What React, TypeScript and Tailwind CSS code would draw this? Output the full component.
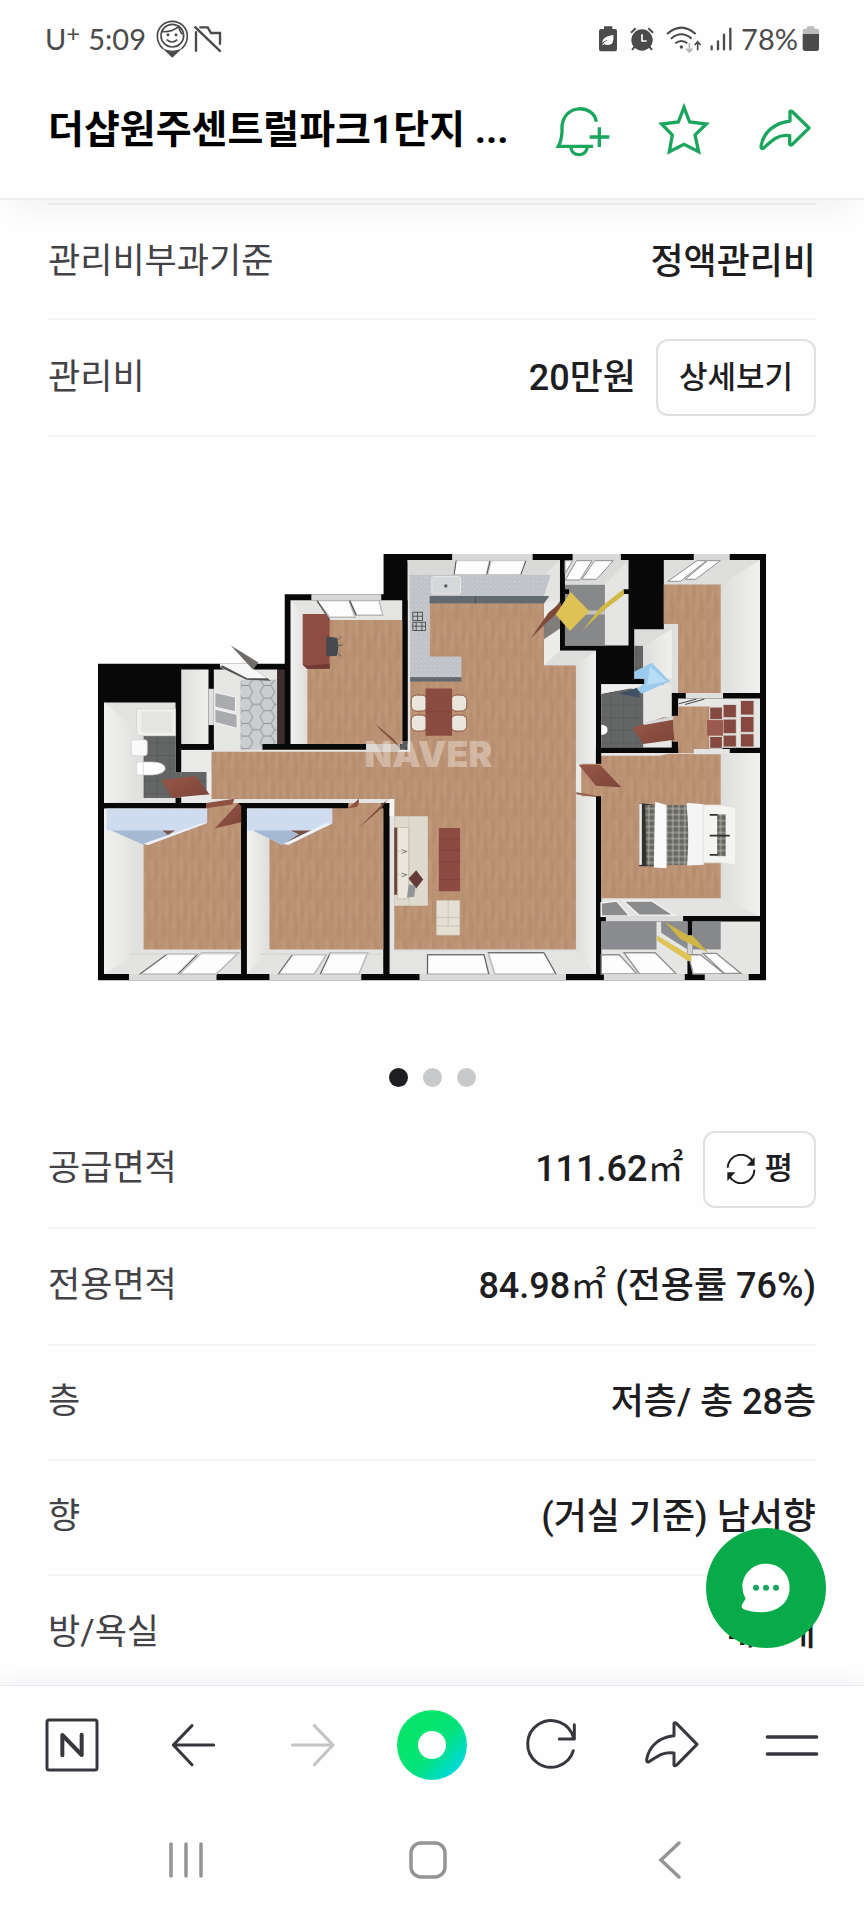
import React from "react";

function Row({
  label,
  tall = false,
  last = false,
  children,
}: {
  label: string;
  tall?: boolean;
  last?: boolean;
  children: React.ReactNode;
}) {
  return (
    <div
      className={`flex items-center justify-between ${tall ? "h-[117px]" : "h-[115px]"} ${
        last ? "" : "border-b-2 border-[#f4f5f6]"
      }`}
    >
      <dt className="text-[35px] leading-[44px] text-[#424247]">{label}</dt>
      <dd className="flex items-center gap-5 text-[36px] leading-[44px] font-medium text-[#1e1e22]">{children}</dd>
    </div>
  );
}

function SquareMetre() {
  return <span className="font-normal">㎡</span>;
}

function StatusBar() {
  return (
    <div className="flex h-20 shrink-0 items-center justify-between pr-11 pb-0.5 pl-[45px] font-['Lato',sans-serif] text-[29px] leading-[40px] text-[#4b4b4b]">
      <div className="flex items-center">
        <span>U</span>
        <span className="mb-3 text-[24px] leading-[24px]">+</span>
        <span className="ml-2">5:09</span>
        <svg className="ml-2 h-10 w-9" viewBox="460 58 108 120" fill="none" stroke="#4b4b4b" strokeWidth="5">
          <path d="M488 148 Q470 132 470 109 A45 44 0 0 1 560 109 Q560 132 542 148" />
          <path d="M485 146 L515 174 L545 146 Q515 160 485 146z" fill="#4b4b4b" stroke="none" />
          <circle cx="515" cy="108" r="34" />
          <path d="M484 96 Q514 98 534 80 Q538 98 546 104 M498 120 Q514 134 530 120" />
          <circle cx="502" cy="105" r="2" fill="#4b4b4b" />
          <circle cx="526" cy="105" r="2" fill="#4b4b4b" />
        </svg>
        <svg className="ml-1 h-[30px] w-7" viewBox="586 74 84 90" fill="none" stroke="#4b4b4b" strokeWidth="7">
          <path d="M592 96 V157 M588 82 L666 157 M602 84 L627 84 L637 101 L664 101 V136" />
        </svg>
      </div>
      <div className="flex items-center">
        <svg className="h-[26px] w-[18px]" viewBox="510 79 54 78">
          <path
            d="M516 88h9v-8h25v8h9q5 0 5 6v55q0 6-6 6h-42q-6 0-6-6V94q0-6 6-6z"
            fill="#4b4b4b"
          />
          <path d="M519 131q0-21 34-25q4 30-17 30q-8 0-10-3l-7 5q5-13 21-17q-15 1-21 10z" fill="#fff" />
        </svg>
        <svg className="ml-[13px] h-[26px] w-6" viewBox="604 79 72 78" fill="none" stroke="#4b4b4b" strokeWidth="6">
          <circle cx="640" cy="121" r="29" fill="#4b4b4b" />
          <path d="M607 99l14-13M673 99l-14-13M618 141l-8 10M662 141l8 10" />
          <path d="M640 104v20h14" stroke="#fff" strokeWidth="5" />
        </svg>
        <svg className="ml-3 h-[27px] w-9" viewBox="708 74 108 81" fill="none" stroke="#4b4b4b" strokeWidth="6">
          <path d="M711 98q43-38 86 0M723 112q31-26 62 0M736 126q18-14 36 0" />
          <circle cx="754" cy="137" r="5" fill="#4b4b4b" stroke="none" />
          <path d="M778 125v26m-9-9l9 10l9-10" stroke="#b5b5b5" strokeWidth="5" />
          <path d="M803 147v-26m-9 10l9-10l9 10" strokeWidth="5" />
        </svg>
        <svg
          className="ml-[7px] h-6 w-6"
          viewBox="834 81 72 72"
          stroke="#4b4b4b"
          strokeWidth="7"
          strokeLinecap="round"
        >
          <path d="M842 139v9M861 124v24M879 104v44M898 86v62" />
        </svg>
        <span className="ml-2">78%</span>
        <svg className="ml-1 h-[26px] w-[18px]" viewBox="1110 79 54 78">
          <path d="M1112 103v-11q0-5 6-5h7v-7h22v7h8q6 0 6 5v11z" fill="#bdbdbd" />
          <path d="M1112 103h49v44q0 7-7 7h-35q-7 0-7-7z" fill="#4b4b4b" />
        </svg>
      </div>
    </div>
  );
}

function Header() {
  return (
    <header className="relative z-10 flex h-[120px] shrink-0 items-center gap-[45px] border-b-2 border-[#ededee] bg-[#fefefe] pr-[51px] pb-[18px] pl-12 shadow-[0_20px_30px_-10px_rgba(0,0,0,0.05)]">
      <h1 className="min-w-0 flex-1 truncate text-[39px] leading-[56px] font-bold text-black">
        더샵원주센트럴파크1단지 ...
      </h1>
      <button type="button" aria-label="알림 추가">
        <svg className="size-14" viewBox="370 305 168 168" fill="none" stroke="#1ba65e" strokeWidth="10">
          <path d="M494 364 C486 313 400 308 391 376 Q393 415 380 438 H484" />
          <path d="M417 440q4 23 25 23t25-23M503 381v59M474 410h59" />
        </svg>
      </button>
      <button type="button" aria-label="관심 등록">
        <svg className="size-14" viewBox="672 305 168 168" fill="none" stroke="#1ba65e" strokeWidth="10">
          <path d="M756 321 L773 365 L823 371 L789 404 L800 454 L756 432 L712 454 L721 404 L689 371 L739 365z" />
        </svg>
      </button>
      <button type="button" aria-label="공유">
        <svg
          className="size-14"
          viewBox="974 305 168 168"
          fill="none"
          stroke="#1ba65e"
          strokeWidth="10"
          strokeLinejoin="round"
        >
          <path d="M1073 333 Q1077 331 1081 335 L1130 383 L1080 432 Q1075 436 1072 432 V406 C1035 401 1017 422 994 443 Q986 448 986 438 C993 392 1030 368 1073 362z" />
        </svg>
      </button>
    </header>
  );
}

function FloorPlan() {
  return (
    <svg className="w-full" viewBox="52 42 2007 1282" role="img" aria-label="단지 평면도">
      <defs>
        <pattern id="wood" width="44" height="120" patternUnits="userSpaceOnUse">
          <rect width="44" height="120" fill="#bb9274" />
          <path d="M0 0h11v70h-11zM22 40h11v80h-11z" fill="#b78e70" />
          <path d="M11 30h11v60h-11zM33 0h11v55h-11z" fill="#be9678" />
          <path d="M11 20v34M33 70v36M3 88v26" stroke="#ae8465" strokeWidth="1.5" />
        </pattern>
        <pattern id="slate" width="38" height="38" patternUnits="userSpaceOnUse">
          <rect width="38" height="38" fill="#646565" />
          <path d="M0 0H38M0 0V38" stroke="#525353" strokeWidth="3" />
        </pattern>
        <pattern id="hex" width="66" height="76" patternUnits="userSpaceOnUse">
          <rect width="66" height="76" fill="#cbcdd1" />
          <path d="M0 38H11L22 19L11 0M22 19H44L55 38H66M55 38L44 57H22L11 38M22 57L11 76M44 19L55 0M44 57L55 76" fill="none" stroke="#83858a" strokeWidth="2.5" />
        </pattern>
        <pattern id="granite" width="14" height="14" patternUnits="userSpaceOnUse">
          <rect width="14" height="14" fill="#c2c5ca" />
          <path d="M2 2h3v2H2zM9 5h3v3H9zM4 10h3v2H4z" fill="#b0b4ba" />
          <path d="M7 1h2v3H7zM1 6h3v2H1zM10 11h3v2h-3z" fill="#d5d7da" />
        </pattern>
        <pattern id="plaid" width="18" height="18" patternUnits="userSpaceOnUse">
          <rect width="18" height="18" fill="#8b8b83" />
          <path d="M0 3h18M0 9h18M3 0v18M9 0v18" stroke="#555650" strokeWidth="2.5" />
          <path d="M0 15h18M15 0v18" stroke="#b9b8ad" strokeWidth="2" />
        </pattern>
        <linearGradient id="wall" x1="0" y1="0" x2="1" y2="0">
          <stop offset="0" stopColor="#f1f1f0" />
          <stop offset="1" stopColor="#dededc" />
        </linearGradient>
        <linearGradient id="wallR" x1="0" y1="0" x2="1" y2="0">
          <stop offset="0" stopColor="#dededc" />
          <stop offset="1" stopColor="#f0f0ef" />
        </linearGradient>
        <linearGradient id="door" x1="0" y1="0" x2="1" y2="1">
          <stop offset="0" stopColor="#98584a" />
          <stop offset="1" stopColor="#7c4438" />
        </linearGradient>
      </defs>

      <path d="M52 372H613V163H910V42H2059V1323H52z" fill="#080808" />

      {/* Left bathroom */}
      <path d="M70 488H285V790H70z" fill="#e3e3e1" />
      <path d="M70 488L189 588V775L70 790z" fill="url(#wall)" />
      <path d="M189 588H285V697H378V765L300 775H189z" fill="url(#slate)" />
      <path d="M168 507H285V588H178Q168 588 168 578z" fill="#efefee" stroke="#d0d0ce" strokeWidth="2" />
      <path d="M182 516H274V578H190Q182 578 182 570z" fill="#e4e4e2" />
      <rect x="152" y="600" width="48" height="48" rx="8" fill="#fafafa" stroke="#cfcfcd" strokeWidth="2" />
      <path d="M168 667H215Q254 668 254 688Q250 703 215 706L168 706z" fill="#fff" stroke="#ccc" strokeWidth="2" />
      <path d="M188 667V706" stroke="#ccc" strokeWidth="2" />

      {/* Storage and entry */}
      <path d="M302 389H384V613H302z" fill="url(#wallR)" />
      <path d="M384 447H400V556H384z" fill="#dfdfdd" />
      <path d="M400 389H592V636H400z" fill="#e6e6e4" />
      <path d="M590 389H613V613H590z" fill="#3b2d2c" />
      <path d="M480 420H590V630H480z" fill="url(#hex)" />
      <path d="M403 458L465 472V516L403 502zM403 508L470 524V566L403 548z" fill="#a9abae" stroke="#f6f6f6" strokeWidth="3" />
      <path d="M418 372H520V390L572 420L498 418L420 384z" fill="#f7f7f7" />
      <path d="M420 382L498 420L572 423L520 386L560 415H500L425 376z" fill="#55514f" />
      <path d="M450 316L534 368L518 390z" fill="#6f6c69" />

      {/* Corridor, living room, kitchen */}
      <path d="M302 630H400V790H302z" fill="#e9e9e8" />
      <path d="M302 697H392V765H302z" fill="url(#slate)" />
      <path d="M392 630H546V613H982V60H1440V333H1548V1304H928V790H392z" fill="#e4e4e2" />
      <path d="M982 60H1440L1392 104H990z" fill="#d9d9d7" />
      <path d="M1488 376L1548 333V1304L1488 1230z" fill="url(#wallR)" />
      <path d="M393 636H990V400H1048V190H1392V376H1488V1230H942V778H393z" fill="url(#wood)" />
      <path d="M546 613H858V630H546z" fill="#080808" />
      <path d="M302 613H400V630H302z" fill="#080808" />
      <path d="M966 181H982V630H958V613H966z" fill="#080808" />
      <path d="M858 613H958V636H858z" fill="#cfc3ba" />
      <path d="M378 697H392V765H378z" fill="#eee" />
      <path d="M242 722L345 708L387 764L275 774z" fill="url(#door)" />

      {/* Study */}
      <path d="M631 181H966V613H631z" fill="#e4e4e2" />
      <path d="M631 181L681 240V613H631z" fill="url(#wall)" />
      <path d="M681 240H966V613H681z" fill="url(#wood)" />
      <path d="M693 163H903V181H693z" fill="#d8d8d7" />
      <path d="M710 182H806L824 232H748zM808 182H896L908 226H828z" fill="#fdfdfd" stroke="#b9b9b8" strokeWidth="4" />
      <path d="M710 182L748 240M808 182L828 226" stroke="#555" strokeWidth="4" />
      <path d="M667 222H735L748 240V387H680L667 375z" fill="#8d4d42" />
      <path d="M667 375L680 387H748V372L680 378z" fill="#6e3a31" />
      <path d="M738 290L770 294Q778 320 770 348L738 350z" fill="#45484e" />
      <path d="M770 318L788 315M774 300L784 290M772 340L784 350" stroke="#5b5d61" strokeWidth="3" />
      <path d="M886 553L940 598L960 625L900 570z" fill="#80503c" />

      {/* Lower-left bedrooms */}
      <path d="M70 807H482V1304H70z" fill="#e3e3e1" />
      <path d="M70 807H189V1230L70 1304z" fill="url(#wall)" />
      <path d="M189 790H482V1230H189z" fill="url(#wood)" />
      <path d="M499 807H909V1304H499z" fill="#e3e3e1" />
      <path d="M499 807H567V1230L499 1304z" fill="url(#wall)" />
      <path d="M567 790H909V1230H567z" fill="url(#wood)" />
      <path d="M52 790H378V806H52zM474 790H804V806H474zM904 790H928V806H904zM482 806H499V1306H482z" fill="#080808" />
      <path d="M378 790L462 777L456 795L376 806z" fill="#8e5142" />
      <path d="M804 806L836 777V790L830 802z" fill="#8e5142" />
      <path d="M403 866L474 790L482 800V848z" fill="url(#door)" />
      <path d="M834 866L920 780L904 806z" fill="#824a3b" />
      <path d="M928 778H942V830H928z" fill="#f5f5f5" />
      <path d="M78 807H380V850L202 916L92 873H78z" fill="#cfdcef" />
      <path d="M92 873H252L272 886L190 916z" fill="#a6b9d3" />
      <path d="M246 873H284L262 886z" fill="#765346" />
      <path d="M380 850L202 916L190 912L362 852z" fill="#eef1f7" />
      <path d="M500 807H756V852L606 916L518 873H500z" fill="#cfdcef" />
      <path d="M518 873H628L655 886L606 916z" fill="#a6b9d3" />
      <path d="M630 873H705L624 916H606L655 884z" fill="#765346" />
      <path d="M756 852L624 916L606 914L735 852z" fill="#eef1f7" />
      <path d="M145 1304H408V1323H145zM567 1304H843V1323H567zM1018 1304H1458V1323H1018z" fill="#d9d9d8" />
      <g fill="#fdfdfd" stroke="#bdbdbc" strokeWidth="5">
        <path d="M178 1304L260 1244H350L292 1304zM296 1304L364 1240H474L408 1304z" />
        <path d="M594 1304L636 1246H738L702 1304zM720 1304L750 1240H862L836 1304z" />
        <path d="M1042 1304V1246H1212L1226 1304zM1244 1304L1224 1240H1392L1428 1304z" />
      </g>
      <path d="M178 1304L260 1244M292 1304L352 1244M594 1304L636 1246M720 1304L750 1240M1042 1304V1246H1212L1226 1304M1224 1240H1392L1428 1304" fill="none" stroke="#5a5a5a" strokeWidth="3" />
      <path d="M150 1244H482M540 1244H909M942 1232H1488" stroke="#d0d0cf" strokeWidth="3" />

      {/* Kitchen and living furniture */}
      <g transform="translate(900 0)">
        <path d="M216 42H458V60H216z" fill="#d8d8d7" />
        <path d="M228 62H328L318 104H222zM334 62H436L424 104H324z" fill="#fdfdfd" stroke="#c5c5c4" strokeWidth="3" />
        <path d="M228 62L222 104M330 62L320 104M438 62L422 104" stroke="#555" strokeWidth="3" />
        <path d="M492 190L540 180V333L492 376z" fill="#ececeb" />
        <path d="M492 376L540 333H648L588 376z" fill="#dededc" />
        <path d="M88 104H512L492 168H148V350H244V412H90z" fill="url(#granite)" />
        <path d="M148 168H508L492 191H148zM90 412H244V425H90z" fill="#626970" />
        <path d="M286 168V191" stroke="#444" strokeWidth="2" />
        <rect x="155" y="110" width="86" height="52" rx="5" fill="#d5d7d8" stroke="#e9e9e9" strokeWidth="3" />
        <circle cx="197" cy="138" r="5" fill="#555" />
        <g fill="none" stroke="#444" strokeWidth="2.5">
          <rect x="98" y="217" width="29" height="25" />
          <rect x="98" y="247" width="38" height="25" />
          <path d="M112 218v24M98 229h29M108 248v24M125 248v24M98 259h38" />
        </g>
        <g fill="#ebe6dc" stroke="#8b5747" strokeWidth="3">
          <rect x="93" y="466" width="48" height="48" rx="16" />
          <rect x="93" y="526" width="48" height="48" rx="16" />
          <rect x="212" y="466" width="48" height="48" rx="16" />
          <rect x="212" y="526" width="48" height="48" rx="16" />
        </g>
        <path d="M136 446H216V588H136z" fill="#8a4b40" />
        <path d="M136 516H216" stroke="#7a4036" strokeWidth="2" />
        <path d="M42 830H143V1099H42z" fill="#dedace" />
        <path d="M42 864H52V1066H42z" fill="#6d4438" />
        <path d="M52 864H86V1078H52z" fill="#eae6db" stroke="#bdb7a6" strokeWidth="2" />
        <path d="M86 830V1099M52 935H86M52 1005H86" stroke="#c4bfb0" strokeWidth="2" />
        <path d="M64 930l16 6l-16 6M64 1000l16 6l-16 6" stroke="#555" strokeWidth="2" fill="none" />
        <path d="M108 992L129 1020L108 1047L85 1017z" fill="#663a38" />
        <path d="M86 1034L106 1040L102 1072L80 1074z" fill="#929699" />
        <path d="M176 865H240V1055H176z" fill="#8c4a42" />
        <path d="M176 898H240M176 932H240M176 967H240M176 1020H240" stroke="#77403a" strokeWidth="2" />
        <path d="M169 1083H239V1187H169z" fill="#e3dfd3" stroke="#c8c3b5" strokeWidth="2" />
        <path d="M169 1134H239M204 1083V1160M169 1160H239" stroke="#c0bbac" strokeWidth="2" />
        <path d="M588 672H604V758H588z" fill="#e9e9e8" />
      </g>

      {/* Right wing */}
      <g transform="translate(1440 0)">
        <path d="M38 42H183V60H38zM402 42H510V60H402z" fill="#d8d8d7" />
        <path d="M15 60H206V317H15z" fill="#e5e5e4" />
        <path d="M15 134H135V317H15z" fill="#87888a" />
        <path d="M15 60H206L135 134H15z" fill="#dbdbda" />
        <path d="M15 212H135V224H15z" fill="#c3c3c3" />
        <path d="M15 62H38L15 100zM50 62H96L60 120H16zM104 62H160L110 118H66z" fill="#fdfdfd" stroke="#8f8f8f" strokeWidth="3" />
        <path d="M0 148H27V162H0zM191 148H208V162H191z" fill="#080808" />
        <path d="M-48 252L0 182V266L-48 298z" fill="#817d7b" />
        <path d="M-89 297L-34 218L2 188L5 208L-40 248z" fill="#7f493a" />
        <path d="M32 156L88 214L30 273L-13 224z" fill="#dec253" />
        <path d="M191 147L192 165L128 214L68 272L122 202z" fill="#d3b744" />

        <path d="M312 60H601V460H312z" fill="#dededc" />
        <path d="M483 134L601 60V460H483z" fill="url(#wallR)" />
        <path d="M312 134H483V460H355V252H312z" fill="url(#wood)" />
        <path d="M324 124L412 62H440L362 124zM376 118L444 62H482L408 118z" fill="#fdfdfd" stroke="#8f8f8f" strokeWidth="3" />

        <path d="M223 268H336V416H223z" fill="#dcdcda" />
        <path d="M223 318H250V416H223z" fill="url(#slate)" />
        <path d="M250 318L336 268V416H250z" fill="url(#wallR)" />
        <path d="M124 433H336V624H124z" fill="#e6e6e5" />
        <path d="M124 462L210 445L250 455V624H124z" fill="url(#slate)" />
        <path d="M124 433H252L210 446L124 462z" fill="#efefee" />
        <path d="M124 555Q143 556 143 571Q143 585 124 586z" fill="#fff" />
        <path d="M178 462L232 444L242 474z" fill="#3f5064" />
        <path d="M223 396L276 369L330 424L245 462L232 446L253 432V417H223z" fill="#9bcbec" />
        <path d="M270 380L320 424L262 436z" fill="#b7dcf4" />

        <path d="M355 476H601V624H355z" fill="#e6e6e5" />
        <path d="M378 460H490V476H378z" fill="#dfdfde" />
        <path d="M355 500L450 500V640H355V606H338V528H355z" fill="url(#wood)" />
        <path d="M357 492L410 478M376 494L434 478" stroke="#444" strokeWidth="3" />
        <g fill="#864940" stroke="#dadad9" strokeWidth="3">
          <path d="M450 502H488V540H450zM450 590H488V626H450z" />
          <path d="M490 494H530V534H490zM490 538H530V582H490zM490 586H530V622H490z" />
          <path d="M542 482H583V526H542zM542 530H583V578H542zM542 582H583V622H542z" />
        </g>
        <path d="M442 541H490V588H442z" fill="#9a5a50" />
        <path d="M218 564L310 533H336L344 600L250 613z" fill="url(#door)" />
        <path d="M252 548L340 529V540L252 556z" fill="#d8d8d8" />

        <path d="M124 640H601V1130H124z" fill="#e3e3e1" />
        <path d="M483 640H601V1130L483 1076z" fill="url(#wallR)" />
        <path d="M64 672H108V642H404V606H440V640H483V1076H124V770H64z" fill="url(#wood)" />
        <path d="M124 640H338L300 648H124zM402 628H510V644H402z" fill="#e4e4e3" />
        <path d="M108 624H355V640H108zM108 640H124V672H108z" fill="#080808" />
        <path d="M56 675L120 675L184 743L108 738z" fill="url(#door)" />
        <path d="M49 758L108 768V772L49 764z" fill="#8e5949" />

        <path d="M238 790L288 796V980H238z" fill="#303131" />
        <path d="M238 792H246V976H238z" fill="#ecebe9" />
        <path d="M256 796H390Q382 880 388 976L260 978z" fill="url(#plaid)" />
        <path d="M286 786L320 796V986L282 984z" fill="#fafafa" />
        <path d="M388 790L432 794V976L382 978Q390 880 380 792z" fill="#f5f5f5" />
        <path d="M430 796H484L528 804V976L484 970H430z" fill="#f4f4f3" stroke="#dddddb" strokeWidth="2" />
        <path d="M472 824H498V950H472z" fill="url(#plaid)" />
        <path d="M450 826H474M450 888H510M450 946H474" stroke="#333" strokeWidth="5" />

        <path d="M124 1090L170 1084L210 1130H124zM190 1084H276L344 1128H238z" fill="#8a8b8d" stroke="#efefee" strokeWidth="5" />
        <path d="M138 1130H370V1146H138z" fill="#d9d9d8" />
        <path d="M124 1146H383V1304H124z" fill="#e5e5e4" />
        <path d="M124 1146H290V1230H124z" fill="#8b8c8f" />
        <path d="M304 1146H383V1230L304 1180z" fill="#8b8c8f" />
        <path d="M398 1146H601V1304H398z" fill="#e5e5e4" />
        <path d="M398 1146H483V1230H398z" fill="#87888a" />
        <path d="M383 1188H398V1264H383z" fill="#d2d2d1" />
        <path d="M124 1246H178L232 1304H124zM192 1240H286L350 1304H240zM386 1246H422L494 1304H400zM430 1242H470L544 1302H494z" fill="#fdfdfd" stroke="#919190" strokeWidth="4" />
        <path d="M132 1304H375V1323H132zM435 1304H567V1323H435z" fill="#d9d9d8" />
        <path d="M292 1188L395 1250V1264H383L292 1204z" fill="#dfc354" />
        <path d="M316 1148L385 1188H398L446 1240L360 1198z" fill="#cfb446" />
      </g>

      <text
        x="853"
        y="683"
        className="font-['Inter',sans-serif] text-[108px] font-black"
        fill="#fff"
        fillOpacity="0.36"
      >
        NAVER
      </text>
    </svg>
  );
}

function RefreshIcon() {
  return (
    <svg className="size-[30px]" viewBox="1102 341 90 90" fill="none" stroke="#1e1e22" strokeWidth="6">
      <path d="M1107 382A40 40 0 0 1 1182 364M1187 388A40 40 0 0 1 1112 408" />
      <path d="M1188 350V376H1164zM1106 422V396H1130z" fill="#1e1e22" stroke="none" />
    </svg>
  );
}

function BrowserBar() {
  const icon = "size-[60px]";
  const line = {
    fill: "none",
    stroke: "#37383d",
    strokeWidth: 9,
    strokeLinecap: "round",
    strokeLinejoin: "round",
  } as const;
  return (
    <nav
      aria-label="브라우저"
      className="relative z-10 grid h-[118px] shrink-0 grid-cols-7 place-items-center border-t border-[#e9ebee] bg-[#fefefe] px-3 shadow-[0_-4px_16px_rgba(60,80,110,0.07)]"
    >
      <button type="button" aria-label="네이버 홈">
        <svg className={icon} viewBox="126 164 180 180" {...line}>
          <rect x="141" y="179" width="150" height="150" rx="6" />
          <path d="M187 285V224L245 284V223" strokeWidth="12" />
        </svg>
      </button>
      <button type="button" aria-label="뒤로">
        <svg className={icon} viewBox="486 164 180 180" {...line}>
          <path d="M576 196L520 254L576 313M520 254H641" />
        </svg>
      </button>
      <button type="button" aria-label="앞으로" disabled>
        <svg className={icon} viewBox="846 164 180 180" {...line} stroke="#c4c4c4">
          <path d="M943 196L999 254L943 313M999 254H878" />
        </svg>
      </button>
      <button type="button" aria-label="그린닷">
        <svg className="size-[70px]" viewBox="0 0 70 70" fill="none">
          <defs>
            <linearGradient id="dot" x1="0.3" y1="0.3" x2="0.9" y2="0.85">
              <stop offset="0" stopColor="#05e56b" />
              <stop offset="0.45" stopColor="#03e27c" />
              <stop offset="1" stopColor="#00d9e3" />
            </linearGradient>
          </defs>
          <circle cx="35" cy="35" r="35" fill="url(#dot)" />
          <circle cx="35" cy="35" r="14" fill="#fefefe" />
        </svg>
      </button>
      <button type="button" aria-label="새로고침">
        <svg className={icon} viewBox="270 164 180 180" {...line}>
          <path d="M424 271A70 70 0 1 1 425 234M427 193V236H382" />
        </svg>
      </button>
      <button type="button" aria-label="공유하기">
        <svg className={icon} viewBox="630 164 180 180" {...line}>
          <path d="M726 189Q729 186 734 190L795 252L733 315Q728 318 726 314V278C692 272 672 292 650 305Q643 306 644 297C652 253 688 229 726 226z" />
        </svg>
      </button>
      <button type="button" aria-label="메뉴">
        <svg className={icon} viewBox="990 164 180 180" {...line} strokeWidth="10">
          <path d="M1006 230H1154M1006 281H1154" />
        </svg>
      </button>
    </nav>
  );
}

function SystemBar() {
  const line = {
    className: "size-11",
    viewBox: "0 0 44 44",
    fill: "none",
    stroke: "#949494",
    strokeWidth: 3.5,
    strokeLinecap: "round",
  } as const;
  return (
    <nav
      aria-label="시스템"
      className="relative z-10 grid h-[117px] shrink-0 grid-cols-3 place-items-center bg-[#fefefe] pr-[73px] pb-1 pl-[65px]"
    >
      <button type="button" aria-label="최근 앱">
        <svg {...line}>
          <path d="M7 6V38M22 6V38M37 6V38" />
        </svg>
      </button>
      <button type="button" aria-label="홈 화면">
        <svg {...line}>
          <rect x="5" y="5" width="34" height="34" rx="10" />
        </svg>
      </button>
      <button type="button" aria-label="이전">
        <svg {...line}>
          <path d="M31 5L13 22L31 39" />
        </svg>
      </button>
    </nav>
  );
}

export default function App() {
  return (
    <div className="flex h-screen flex-col overflow-hidden bg-[#fefefe] font-['Roboto','Noto_Sans_CJK_KR',sans-serif]">
      <StatusBar />
      <Header />
      <div className="relative min-h-0 flex-1">
        <main className="h-full overflow-y-auto [scrollbar-width:none]">
          <dl className="px-12">
            <div className="h-[5px] border-b-2 border-[#f1f2f4]" />
            <Row label="관리비부과기준">정액관리비</Row>
            <Row label="관리비" tall>
              20만원
              <button
                type="button"
                className="h-[77px] rounded-xl border-2 border-[#dfdfe0] px-[21px] text-[31px] font-medium"
              >
                상세보기
              </button>
            </Row>
          </dl>
          <section aria-label="평면도" className="flex flex-col items-center px-[98px] pt-[117px] pb-[25px]">
            <FloorPlan />
            <div className="mt-[87px] flex gap-[15px]">
              <button type="button" aria-label="1번 이미지" className="size-[19px] rounded-full bg-[#1e1e22]" />
              <button type="button" aria-label="2번 이미지" className="size-[19px] rounded-full bg-[#c8c9cb]" />
              <button type="button" aria-label="3번 이미지" className="size-[19px] rounded-full bg-[#c8c9cb]" />
            </div>
          </section>
          <dl className="px-12">
            <Row label="공급면적" tall>
              <span>
                111.62
                <SquareMetre />
              </span>
              <button
                type="button"
                className="flex h-[77px] items-center gap-2 rounded-xl border-2 border-[#dfe0e1] px-[21px] text-[31px] font-medium"
              >
                <RefreshIcon />평
              </button>
            </Row>
            <Row label="전용면적" tall>
              <span>
                84.98
                <SquareMetre /> (전용률 76%)
              </span>
            </Row>
            <Row label="층">저층/ 총 28층</Row>
            <Row label="향">(거실 기준) 남서향</Row>
            <Row label="방/욕실" last>
              4/2개
            </Row>
          </dl>
        </main>
        <button
          type="button"
          aria-label="채팅 문의"
          className="absolute right-[38px] bottom-[37px] flex size-[120px] items-center justify-center rounded-full bg-[#07ab4a]"
        >
          <svg className="size-[60px]" viewBox="707 594 180 180">
            <path
              d="M797 611C838 611 868 642 868 682C868 730 830 757 783 757C762 757 745 754 730 748Q720 741 726 732L736 716Q726 700 726 682C726 642 757 611 797 611z"
              fill="#fff"
            />
            <path d="M767 683h.1M797 683h.1M827 683h.1" stroke="#1ba65e" strokeWidth="18" strokeLinecap="round" />
          </svg>
        </button>
      </div>
      <BrowserBar />
      <SystemBar />
    </div>
  );
}
